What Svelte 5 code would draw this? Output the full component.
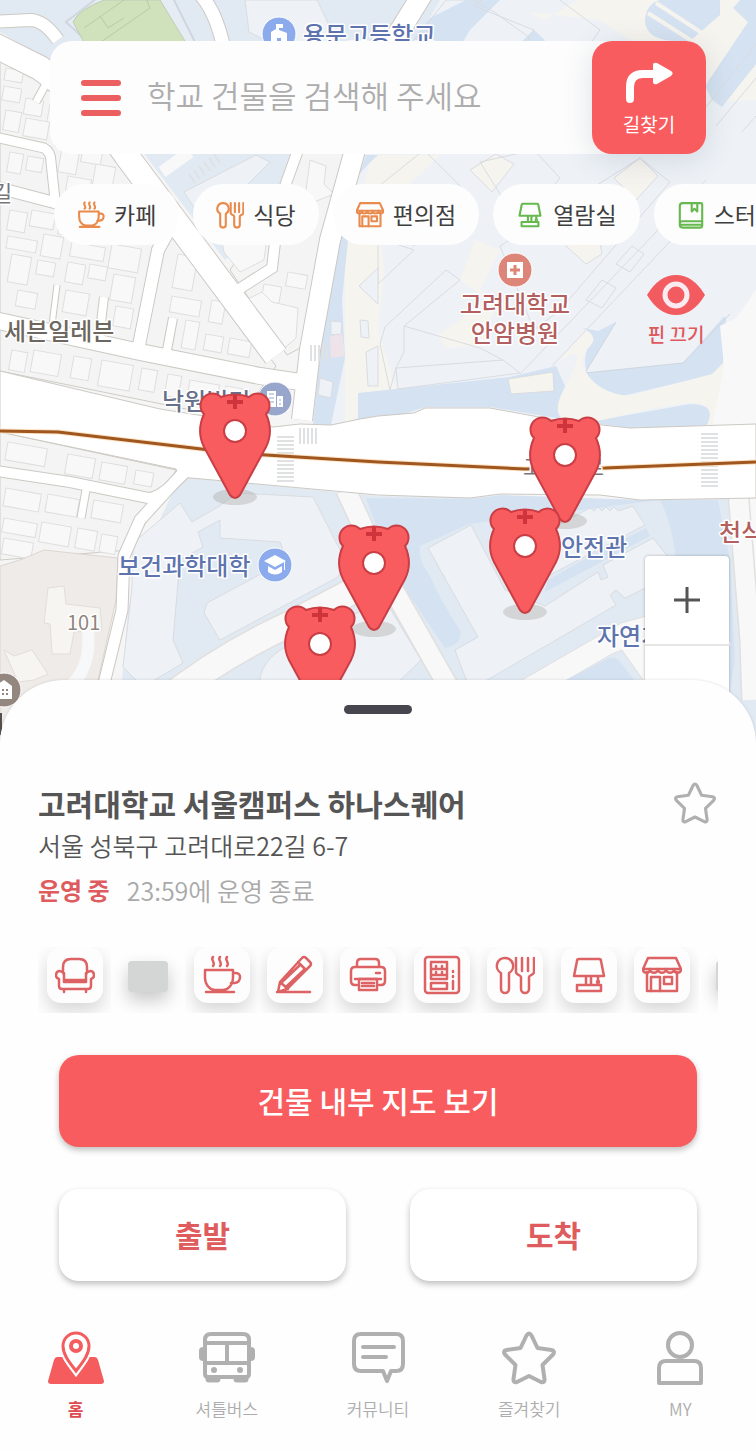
<script>
	let keyword = $state('');
	let showPins = $state(true);
	let favorite = $state(false);
	let tab = $state('home');

	const categories = [
		{ icon: 'cup', label: '카페', tone: 'orange' },
		{ icon: 'cutlery', label: '식당', tone: 'orange' },
		{ icon: 'store', label: '편의점', tone: 'orange' },
		{ icon: 'lamp', label: '열람실', tone: 'green' },
		{ icon: 'book', label: '스터디룸', tone: 'green' }
	];

	const facilities = ['sofa', null, 'cup', 'pencil', 'printer', 'vending', 'cutlery', 'lamp', 'store', null];

	const tabs = [
		{ id: 'home', label: '홈' },
		{ id: 'bus', label: '셔틀버스' },
		{ id: 'talk', label: '커뮤니티' },
		{ id: 'star', label: '즐겨찾기' },
		{ id: 'my', label: 'MY' }
	];

	// tip of each pin on the map
	const pins = [
		{ x: 235, y: 498 },
		{ x: 565, y: 522 },
		{ x: 374, y: 630 },
		{ x: 525, y: 613 },
		{ x: 320, y: 711 }
	];

	const roads = [
		{ w: 24, d: 'M-20 38 L40 68 Q95 108 126 155 L197 250 L276 356' },
		{ w: 12, d: 'M-10 22 L30 20 Q44 20 58 40' },
		{ w: 13, d: 'M196 -10 Q218 10 226 60' },
		{ w: 9, d: 'M-5 137 L44 148 Q51 152 51 162 L55 200' },
		{ w: 11, d: 'M-5 187 L60 204' },
		{ w: 12, d: 'M168 232 L158 250 L139 345' },
		{ w: 16, d: 'M-10 319 L140 352 L260 376 L300 382' },
		{ w: 10, d: 'M298 150 L280 200 L272 268 L236 291' },
		{ w: 20, d: 'M425 -10 L404 24 Q366 80 355 150 L330 240 L310 350 L302 420' },
		{ w: 10, d: 'M-10 470 L70 482 L148 498 Q160 498 186 472' },
		{ w: 11, d: 'M182 474 L140 520 L124 556 L122 610 L100 700' },
		{ w: 5, d: 'M57 285 L52 325' },
		{ w: 8, d: 'M104 297 L99 340' },
		{ w: 8, d: 'M173 318 L167 350' },
		{ w: 7, d: 'M86 490 L81 518' },
		{ w: 7, d: 'M46 84 L36 102' }
	];

	const campusRoads = [
		{ w: 25, d: 'M160 704 Q220 656 290 624 L385 574' },
		{ w: 19, d: 'M346 490 L385 575 L456 700' },
		{ w: 19, d: 'M738 490 L750 640 L752 700' }
	];

	// house outlines left of the hill road: x, y, width, height
	const houses = [
		[6, 68, 18, 12], [4, 86, 18, 14], [26, 98, 18, 16], [50, 104, 16, 22],
		[6, 110, 16, 20], [26, 118, 24, 18], [58, 128, 24, 18], [10, 152, 14, 20], [28, 156, 16, 14],
		[62, 148, 18, 24], [84, 142, 20, 20], [68, 176, 24, 14], [96, 164, 20, 22],
		[66, 196, 16, 16], [86, 194, 24, 16], [114, 192, 22, 20], [10, 210, 18, 20], [32, 210, 24, 16],
		[60, 220, 22, 14], [86, 218, 28, 20], [120, 218, 22, 18], [8, 236, 30, 12], [44, 234, 20, 22],
		[72, 242, 34, 14], [112, 244, 30, 24], [12, 254, 20, 28], [38, 260, 18, 14], [68, 262, 18, 20],
		[90, 264, 18, 14], [114, 274, 22, 26], [18, 290, 20, 16], [66, 290, 24, 22], [116, 306, 18, 20],
		[178, 254, 20, 34], [172, 296, 30, 16], [186, 320, 14, 28], [212, 300, 14, 22], [206, 334, 18, 16],
		[230, 338, 22, 16], [288, 272, 20, 14], [264, 284, 18, 20],
		[12, 350, 16, 20], [34, 350, 28, 22], [74, 356, 18, 22], [102, 360, 32, 26], [142, 368, 16, 22],
		[168, 374, 14, 22], [190, 380, 30, 14], [226, 386, 24, 12], [8, 442, 40, 18], [68, 454, 28, 20],
		[102, 462, 26, 18], [136, 470, 18, 14], [6, 488, 36, 18], [48, 494, 32, 18], [94, 500, 30, 18],
		[4, 518, 34, 14], [42, 522, 30, 20], [78, 528, 20, 20], [102, 534, 16, 18], [4, 538, 30, 16]
	];

	// wings of the hospital
	const wards = [
		'M408 48L446 0 474 0 494 12 530 38 512 60 430 60z',
		'M474 6L510 -20 560 0 600 30 590 44 540 60 524 44 534 30z',
		'M374 190L424 150 466 192 414 246z',
		'M378 238L414 250 378 284z',
		'M385 327L446 270 460 280 404 326 404 352 396 368 390 390 380 344z',
		'M396 368L503 360 520 373 398 389z',
		'M404 326L480 348 503 360',
		'M480 162L534 150 560 178 520 226z',
		'M500 246L640 158 670 182 560 310 534 330z',
		'M520 374L706 180 M552 366L700 210',
		'M586 300l16 8 14-20-14-8z M616 264l14 8 14-18-12-8z',
		'M702 112L756 44 M716 126L756 78 M742 132l14-16'
	];

	const crossings = [
		{ x: 300, y: 428, w: 23, h: 16, rows: false },
		{ x: 311, y: 345, w: 20, h: 16, rows: false },
		{ x: 277, y: 437, w: 17, h: 48, rows: true },
		{ x: 701, y: 434, w: 17, h: 58, rows: true }
	];
</script>

{#snippet icon(name)}
	<svg class="icon" viewBox="0 0 40 40" aria-hidden="true">
		{#if name === 'cup'}
			<path d="M3 15h28v7c0 8-5 13-10 13h-8C8 35 3 30 3 22z M31 18h3c6 0 5 9-1 10h-4 M4 37h28" />
			<path d="M11 2c-3 3 3 5 0 9 M18 2c-3 3 3 5 0 9 M25 2c-3 3 3 5 0 9" />
		{:else if name === 'cutlery'}
			<path d="M10 3a8 8 0 0 1 4 15v16a4 4 0 0 1-8 0V18A8 8 0 0 1 10 3z" />
			<path d="M21 3v14c0 3 5 3 5 5v12a4 4 0 0 0 8 0V22c0-2 5-2 5-5V3 M27 3v13 M33 3v13" />
		{:else if name === 'store'}
			<path d="M6 3h28l5 11H1z M5 17v19h30V17" />
			<path d="M1 14c0 5 7 5 7 0 0 5 8 5 8 0 0 5 8 5 8 0 0 5 8 5 8 0 0 5 7 5 7 0" />
			<path d="M9 36V22h9v14 M22 22h8v7h-8z" />
		{:else if name === 'lamp'}
			<path d="M10 4h20q2 0 2 2l3 15H5L8 6q0-2 2-2z M17 21v9 M22 21v9 M29 21v4 M8 30h24v6H8z" />
			<circle cx="29" cy="27" r="1" />
		{:else if name === 'book'}
			<path d="M8 3h26q2 0 2 2v30q0 3-3 3H8q-4 0-4-4V7q0-4 4-4z M4 32q0-3 4-3h28 M5 34h30 M21 4v11l4-4 4 4V4" />
		{:else if name === 'sofa'}
			<path d="M8 16v-4q0-8 8-8h8q8 0 8 8v4" />
			<path d="M9 25v-5a4 4 0 1 0-5 4v7q0 3 3 3h26q3 0 3-3v-7a4 4 0 1 0-5-4v5z M9 18v9h22v-9 M9 34v3 M31 34v3" />
		{:else if name === 'pencil'}
			<path d="M27 3q2-2 4 0l4 4q2 2 0 4L12 34 3 37l2-10z M23 7l8 8 M25 10L7 27 M30 14L12 31 M5 27l8 7 M2 37h33" />
		{:else if name === 'printer'}
			<path d="M9 12V8q0-4 4-4h14q4 0 4 4v4 M9 30H7q-4 0-4-4V16q0-4 4-4h26q4 0 4 4v10q0 4-4 4h-2 M7 24h26 M28 18h4" />
			<path d="M11 24h18v11H11z M14 28h12 M14 31h12" />
		{:else if name === 'vending'}
			<rect x="3" y="2" width="34" height="36" rx="3" />
			<path d="M9 7h16v17H9z M9 14h16 M9 20h16 M14 11v2 M20 11v2 M14 17v2 M20 17v2 M9 28h16v6H9z M31 16v1 M31 21v1 M31 26v8" />
		{/if}
	</svg>
{/snippet}

{#snippet star()}
	<svg class="star" viewBox="0 0 54 54" aria-hidden="true">
		<path d="M24.500 4.500q2.500-4 5 0l6 12.500 14 2q4 1 1.500 4.500L40.500 34l2 14q.5 4-3.500 3l-12-6-12 6q-4 1-3.500-3l2-14L3 23.500Q.5 20 4.500 19l14-2z" />
	</svg>
{/snippet}

<div class="app">
	<main class="map-area">
		<svg class="map" viewBox="0 0 756 750" preserveAspectRatio="xMidYMin slice" role="img" aria-label="지도">
			<rect width="756" height="750" fill="#f5f5f5" />

			<!-- campus and hospital grounds -->
			<path class="water" d="M0 0H480L376 60 345 160 225 260 145 155 48 60 0 32z" />
			<path class="ground" d="M350 155L440 0H756V430H313L335 250z" />
			<path class="pool" d="M406 48L430 18 466 0H500L470 30 452 60H406z M512 50L534 30 545 40 530 60z" />
			<path class="beige" d="M345 250L372 155H440L378 214 384 270 378 330 396 390 345 425z" />
			<path class="beige" d="M530 12L544 20 596 -10H756V100L712 102 700 80 660 60 600 20z" />
			<path class="beige line" d="M470 170l26-16 18 10-22 28z M614 178l26-20 18 18-22 24z M566 246l10-10 24 6 2 12-16 10z" />
			<path class="beige" d="M475 240L460 280 488 300 438 335 446 348 482 346 496 304 480 290 500 250z" />
			<path class="pool" d="M660 0H720V15L690 41Q645 44 645 20 646 4 660 0z M742 -2L733 8 748 22 705 86 712 100 722 107 756 64V-2z" />
			<path d="M648 13L692 41 M656 3L702 33" stroke="#f6f4ef" stroke-width="4" />
			<path class="pool" d="M358 393L510 377 556 366 566 388 Q580 410 611 418L690 404Q711 404 711 416T703 427L630 428 556 418 490 407 425 407 395 417 358 420z" />
			<path class="beige line" d="M508 379L553 372 554 391 511 394z" />
			<path class="pool" d="M334 240L352 190Q354 176 378 155H366L338 232z M340 240L350 220 342 300 345 358 331 425 313 425 322 330z" />
			<path class="pool" d="M583 328L598 331 616 322 700 300 726 318 723 363Q724 372 711 375L618 397Q598 396 588 376 580 354 594 340z" />
			<path class="ground" d="M616 322L585 373 683 363 756 280V230H680z" />
			<path d="M616 322L585 373 683 363 730 314" fill="none" stroke="#d0d6df" />
			<path class="beige" d="M585 329Q600 338 588 348 576 362 590 378T630 396L712 374 724 362 756 400V430L706 427Q716 408 700 404T611 418 565 387 558 363z" />
			<path d="M720 326L736 318 756 290V430H712L724 366z" fill="#f8f8f8" />
			{#each wards as d}
				<path class="ward" {d} />
			{/each}
			<path class="pink" d="M330 336l12-2 3 22-14 2z" />
			<path class="ground line" d="M331 321l11 1-1 12-10 1z M320 378l13 4-2 16-13-3z M360 320l8 1 1 17-8-1z M366 352l12-6v40h-10z M359 286l19-18v36z" />

			<!-- school field -->
			<path d="M66 22L105 -8H170L196 44H90z" fill="#e6ecf4" stroke="#d0d6df" stroke-width="2" />
			<path d="M73 22Q78 10 104 0H160L188 46H86z" fill="#cfe2bc" stroke="#c0ccb5" />
			<path d="M84 28L124 0 M98 44L150 8 146 -2 M100 16l8 12 16-10" fill="none" stroke="#b5cca4" />
			<path class="ground line" d="M245 0h72l20 42-48 10-40-20z M184 192L256 155 270 162 206 226z" />
			<path d="M162 172L190 152" stroke="#f8f8f8" stroke-width="12" />
			<g class="stripes">
				{#each [0, 1, 2, 3, 4, 5] as n}
					<path d="M{189 + n * 5} {174 - n * 4}l6 9" />
				{/each}
			</g>

			<!-- residential blocks -->
			<path class="block" d="M0 48L44 78 120 156 276 366 240 420 0 371z" />
			<path class="block" d="M230 270L276 200 298 150H350L302 347 287 355z M0 432L176 470 130 550 0 560z" />
			{#each houses as [x, y, w, h]}
				<rect class="house" {x} {y} width={w} height={h} transform="rotate(10 {x} {y})" />
			{/each}
			<path class="house" d="M310 160l16 6-2 18 10 10-20 8-8-12z M246 300l16-8 10 10 26 6-2 30-16 14-8-12z M214 200l36-10 22 10-8 60-24 12-16-20z" />

			<!-- apartment hill -->
			<path d="M0 566L20 560 44 550 118 558 116 600 98 680 0 750z" fill="#efebe8" stroke="#ddd6d0" />
			<path class="estate" d="M48 588l16-2 2 18 34 4 2 22-28 2-4 22-18 0-2-30-6-1z M4 650l10 6 18-6 16 24-14 6-16 2z" />
			<path d="M88 630Q92 670 66 690" fill="none" stroke="#f7f8f9" stroke-width="12" />

			<!-- lower campus -->
			<path class="water" d="M180 477L378 496 640 500 756 498V750H116L128 610 136 570z" />
			<path class="pool" d="M366 498L470 499 500 495 640 500H718L730 560 735 660 730 690H650L670 560 650 536 560 516 470 524 420 546Q418 560 430 576T461 630Q462 646 445 648L392 570z" />
			<path class="water" d="M420 546L470 524 660 500Q690 560 670 690H455L445 648Q464 644 460 630 440 600 430 576z" />
			<path class="pool" d="M545 592L650 536 646 528 590 556 548 580z" />
			<path class="ground line" d="M133 543L180 503 192 522 218 507 237 493 313 497 345 560 338 577 220 640 204 613 207 603 287 560 280 542 220 538 220 520 198 532 203 547 180 560 173 640 183 663 143 687 123 667 132 587z" />
			<path class="ground line" d="M428 548L471 525 505 590 545 606 598 572 601 580 608 577 603 565 653 538 672 562 672 575 625 598 616 590 610 595 616 605 470 690 455 650 478 637z" />
			<path class="ground line" d="M560 524L590 508 594 511 598 507 602 511 606 507 610 511 614 507 618 511 633 506 645 525 548 576 540 560z" />
			<path class="ground line" d="M260 690Q256 660 293 643L385 600 421 660 380 700z" />
			<path d="M515 684L621 623 650 615V690L622 650 612 654 560 684z" fill="#f8f8f8" stroke="#e0e0df" />
			<path class="pool" d="M554 686L609 658Q616 656 620 662L642 690z" />
			<path d="M744 500L756 498V700H744z" fill="#f8f8f8" />

			<!-- roads: casing first, then the surface -->
			{#each roads as road}
				<path d={road.d} fill="none" stroke="#ccc9c3" stroke-width={road.w + 2} />
			{/each}
			{#each campusRoads as road}
				<path d={road.d} fill="none" stroke="#e0e0df" stroke-width={road.w + 3} />
			{/each}
			{#each campusRoads as road}
				<path d={road.d} fill="none" stroke="#f8f8f8" stroke-width={road.w} />
			{/each}
			<path d="M0 371L160 409 273 427 300 424 331 425 360 419 378 416 414 413 425 408 490 408 555 420 630 428 756 424V498L640 500 600 495 500 494 470 498 378 495 180 477 176 469 0 432z" fill="#fff" stroke="#ccc9c3" stroke-width="1" />
			{#each roads as road}
				<path d={road.d} fill="none" stroke="#fff" stroke-width={road.w} />
			{/each}
			{#each crossings as c}
				<g class="stripes">
					{#each Array(Math.floor((c.rows ? c.h : c.w) / 4)) as _, n}
						{#if c.rows}
							<path d="M{c.x} {c.y + n * 4}h{c.w}" />
						{:else}
							<path d="M{c.x + n * 4} {c.y}v{c.h}" />
						{/if}
					{/each}
				</g>
			{/each}

			<!-- subway line -->
			<path d="M0 431L58 432 235 453 378 462 525 469 605 468 756 462" fill="none" stroke="#fbe3c4" stroke-width="5" />
			<path d="M0 431L58 432 235 453 378 462 525 469 605 468 756 462" fill="none" stroke="#a0561f" stroke-width="3" />

			<!-- place labels -->
			<g class="labels">
				<text class="school" x="303" y="44">용문고등학교</text>
				<text class="road-name" x="-8" y="201">길</text>
				<text class="shop" x="4" y="340">세븐일레븐</text>
				<text class="office" x="162" y="410">낙원빌딩</text>
				<text class="hospital" x="515" y="313" text-anchor="middle">고려대학교</text>
				<text class="hospital" x="515" y="342" text-anchor="middle">안암병원</text>
				<text class="road-name" x="523" y="475">고려대로</text>
				<text class="school" x="118" y="575">보건과학대학</text>
				<text class="school" x="561" y="556">안전관</text>
				<text class="school" x="597" y="645">자연계캠퍼스</text>
				<text class="hospital" x="719" y="541">천식환경</text>
				<text class="number" x="67" y="630">101</text>
			</g>

			<!-- place markers -->
			<g stroke="#fff" stroke-width="1">
				<circle cx="279" cy="34" r="17" fill="#8cabed" />
				<circle cx="275" cy="399" r="17" fill="#98a6cc" />
				<circle cx="515" cy="270" r="17" fill="#dd8579" />
				<circle cx="275" cy="565" r="17" fill="#8cabed" />
				<circle cx="4" cy="690" r="17" fill="#93877f" />
			</g>
			<path d="M271 42v-10l5-3v-5h7v4h-4v2l8 3v9h-6v-4h-4v4z" fill="#fff" />
			<path d="M267 391h9v16h-9z M277 396h6v11h-6z" fill="#fff" />
			<path d="M269 394h5 M269 398h5 M269 402h5 M279 400h2 M279 404h2" stroke="#98a6cc" stroke-width="1" />
			<path d="M507 262h16v16h-16z" fill="#fff" />
			<path d="M510 270h10 M515 265v10" stroke="#dd8579" stroke-width="3" />
			<path d="M264 561l11-6 11 6-11 6z M268 566l7 4 7-4v6q-7 5-14 0z M284 562h1v8h-1z" fill="#fff" />
			<path d="M-5 686l9-6 8 6v13H-5z" fill="#fff" />
			<path d="M2 690h6 M2 694h6" stroke="#93877f" stroke-width="2" stroke-dasharray="2 2" />
			<path d="M0 713h2v22h-2z" fill="#55504c" />

			{#if showPins}
				{#each pins as pin}
					<ellipse cx={pin.x} cy={pin.y - 1} rx="22" ry="8" fill="#a9a9a4" opacity="0.4" />
				{/each}
				{#each pins as pin}
					<g transform="translate({pin.x} {pin.y})">
						<path
							d="M-5 -3L-31 -51C-36 -61 -36 -73 -31 -84A12 12 0 1 1 -14 -101Q0 -106 14 -101A12 12 0 1 1 31 -84C36 -73 36 -61 31 -51L5 -3Q0 3 -5 -3z"
							fill="#f95c5e"
							stroke="#c93e45"
							stroke-width="2"
						/>
						<path d="M-8 -96H8 M0 -103V-89" stroke="#cf333b" stroke-width="4" />
						<circle cy="-67" r="11" fill="#fff" stroke="#c93e45" stroke-width="2" />
					</g>
				{/each}
			{/if}
		</svg>

		<form class="search" onsubmit={(e) => e.preventDefault()}>
			<button type="button" class="menu" aria-label="메뉴">
				<span></span><span></span><span></span>
			</button>
			<input type="text" aria-label="건물 검색" placeholder="학교 건물을 검색해 주세요" bind:value={keyword} />
			<button type="button" class="route">
				<svg viewBox="0 0 48 42" aria-hidden="true">
					<path d="M5 37V25Q5 12 18 12H30" fill="none" stroke="#fff" stroke-width="8" stroke-linecap="round" />
					<path d="M28 3q0-3 4-2l14 8q3 2 0 5l-14 8q-4 1-4-2z" fill="#fff" />
				</svg>
				길찾기
			</button>
		</form>

		<div class="chips">
			{#each categories as category}
				<button class="chip {category.tone}">
					{@render icon(category.icon)}
					<span>{category.label}</span>
				</button>
			{/each}
		</div>

		<button class="pin-toggle" onclick={() => (showPins = !showPins)}>
			<svg viewBox="0 0 58 42" aria-hidden="true">
				<path d="M0 21Q12 1 29 1T58 21Q46 41 29 41T0 21z" fill="#f25c60" />
				<circle cx="29" cy="21" r="11" fill="none" stroke="#fbeaf0" stroke-width="5" />
			</svg>
			{showPins ? '핀 끄기' : '핀 켜기'}
		</button>

		<div class="zoom">
			<button aria-label="확대">
				<svg viewBox="0 0 26 26" aria-hidden="true"><path d="M0 13H26 M13 0V26" /></svg>
			</button>
			<button aria-label="축소">
				<svg viewBox="0 0 26 26" aria-hidden="true"><path d="M0 13H26" /></svg>
			</button>
		</div>
	</main>

	<section class="sheet">
		<div class="handle"></div>

		<div class="place">
			<div class="title-row">
				<h1>고려대학교 서울캠퍼스 하나스퀘어</h1>
				<button class="favorite" class:on={favorite} aria-label="즐겨찾기 추가" onclick={() => (favorite = !favorite)}>
					{@render star()}
				</button>
			</div>
			<p class="address">서울 성북구 고려대로22길 6-7</p>
			<p class="hours"><strong>운영 중</strong><span>23:59에 운영 종료</span></p>
		</div>

		<ul class="facilities">
			{#each facilities as facility}
				<li>
					{#if facility}
						<div class="card">{@render icon(facility)}</div>
					{:else}
						<div class="blank"></div>
					{/if}
				</li>
			{/each}
		</ul>

		<div class="actions">
			<button class="primary">건물 내부 지도 보기</button>
			<button>출발</button>
			<button>도착</button>
		</div>

		<nav>
			{#each tabs as item}
				<button class:active={tab === item.id} onclick={() => (tab = item.id)}>
					{#if item.id === 'home'}
						<svg class="tab-icon" viewBox="0 0 56 54" aria-hidden="true">
							<path d="M9 26h38q2 0 3 3l6 21q0 3-3 3H3q-3 0-3-3l6-21q1-3 3-3z" fill="currentColor" />
							<path d="M28 42C22 34 14 25 14 15a14 14 0 0 1 28 0c0 10-8 19-14 27z" fill="#fff" stroke="#fff" stroke-width="5" />
							<path d="M28 40C22 32 15 24 15 15a13 13 0 0 1 26 0c0 9-7 17-13 25z" fill="#fff" stroke="currentColor" stroke-width="3" />
							<circle cx="28" cy="15" r="5" fill="none" stroke="currentColor" stroke-width="4" />
						</svg>
					{:else if item.id === 'bus'}
						<svg class="tab-icon line-icon" viewBox="0 0 56 54" aria-hidden="true">
							<path d="M12 3h32q6 0 6 6v34q0 3-3 3H9q-3 0-3-3V9q0-6 6-6z M6 12h44 M28 12v20 M6 32h44 M6 18H4q-2 0-2 2v6q0 2 2 2h2 M50 18h2q2 0 2 2v6q0 2-2 2h-2" />
							<path d="M10 48h8 M38 48h8" stroke-width="7" />
							<circle cx="15" cy="39" r="3" fill="currentColor" stroke="none" />
							<circle cx="41" cy="39" r="3" fill="currentColor" stroke="none" />
						</svg>
					{:else if item.id === 'talk'}
						<svg class="tab-icon line-icon" viewBox="0 0 56 54" aria-hidden="true">
							<path d="M11 3h35q7 0 7 7v23q0 7-7 7h-5l-4 10-4-10H11q-7 0-7-7V10q0-7 7-7z M13 16h31 M13 26h23" />
						</svg>
					{:else if item.id === 'star'}
						{@render star()}
					{:else}
						<svg class="tab-icon line-icon" viewBox="0 0 56 54" aria-hidden="true">
							<circle cx="28" cy="14" r="12" />
							<path d="M14 30h28q7 0 7 7v15H7V37q0-7 7-7z" />
						</svg>
					{/if}
					<span>{item.label}</span>
				</button>
			{/each}
		</nav>
	</section>
</div>

<style>
	:global(body) {
		background: #fefefe;
	}

	.app {
		display: flex;
		flex-direction: column;
		min-height: 100vh;
		overflow: hidden;
		font-family: "Noto Sans CJK KR", "Noto Sans", sans-serif;
		color: #555;
	}

	button {
		border: 0;
		padding: 0;
		background: none;
		font: inherit;
		color: inherit;
		cursor: pointer;
	}

	.icon {
		display: block;
		width: 40px;
		height: 40px;
		fill: none;
		stroke: currentColor;
		stroke-width: 2.500;
		stroke-linejoin: round;
		stroke-linecap: round;
	}

	/* map */
	.map-area {
		position: relative;
		flex: 1;
		display: flex;
		flex-direction: column;
		min-height: 560px;
	}

	.map {
		position: absolute;
		top: 0;
		left: 0;
		width: 100%;
		height: calc(100% + 70px);
	}

	.water {
		fill: #e1eaf3;
	}

	.pool {
		fill: #d5e2f1;
	}

	.ground {
		fill: #eef2f7;
	}

	.beige {
		fill: #f6f4ef;
	}

	.ward {
		fill: none;
		stroke: #d9dce0;
	}

	.pink {
		fill: #efe3ea;
	}

	.line {
		stroke: #d9dce0;
		stroke-width: 1;
	}

	.block {
		fill: #f4f4f4;
		stroke: #cfccc6;
	}

	.house {
		fill: #f8f8f8;
		stroke: #dedede;
		stroke-width: 1;
	}

	.estate {
		fill: #f6f5f2;
		stroke: #e2ded9;
	}

	.stripes {
		stroke: #dfe1e3;
		stroke-width: 2;
	}

	.labels {
		font-size: 24px;
		font-weight: 500;
		paint-order: stroke;
		stroke: #fff;
		stroke-width: 3px;
		stroke-linejoin: round;
	}

	.school {
		fill: #5e74ae;
	}

	.office {
		fill: #66708a;
	}

	.shop {
		fill: #6e675f;
	}

	.hospital {
		fill: #b35f60;
	}

	.road-name {
		fill: #77757a;
		font-size: 22px;
		font-weight: 400;
	}

	.number {
		fill: #8d857d;
		font-size: 20px;
		font-weight: 400;
	}

	.search {
		position: relative;
		display: flex;
		align-items: stretch;
		height: 113px;
		margin: 41px 50px 0;
		border-radius: 22px;
		background: #fdfdfd;
	}

	.menu {
		display: flex;
		flex-direction: column;
		justify-content: center;
		gap: 9px;
		flex: none;
		width: 40px;
		margin: 0 26px 0 31px;
	}

	.menu span {
		height: 6px;
		border-radius: 3px;
		background: #ec5f61;
	}

	input {
		flex: 1;
		min-width: 0;
		border: 0;
		padding: 0 0 6px;
		background: none;
		font: inherit;
		font-size: 31px;
		font-weight: 350;
		color: #555;
		outline: none;
	}

	input::placeholder {
		color: #adadad;
		opacity: 1;
	}

	.route {
		display: flex;
		flex-direction: column;
		align-items: center;
		justify-content: center;
		gap: 6px;
		flex: none;
		width: 114px;
		padding-top: 4px;
		border-radius: 20px;
		background: #f95c5e;
		box-shadow: 0 6px 30px rgba(60, 80, 100, 0.16);
		font-size: 19px;
		line-height: 28px;
		color: #fff;
	}

	.route svg {
		width: 48px;
		height: 42px;
	}

	.chips {
		position: relative;
		display: flex;
		gap: 14px;
		margin-top: 30px;
		padding-left: 54px;
		overflow: hidden;
	}

	.chip {
		display: flex;
		align-items: center;
		gap: 9px;
		flex: none;
		height: 61px;
		padding: 0 23px;
		border-radius: 31px;
		background: #fdfdfd;
		font-size: 23px;
		line-height: 32px;
	}

	.chip .icon {
		width: 28px;
		height: 28px;
		stroke-width: 3;
	}

	.chip span {
		padding-bottom: 2px;
		color: #3f3f3f;
	}

	.orange {
		color: #e98b4c;
	}

	.green {
		color: #66b84f;
	}

	.pin-toggle {
		position: relative;
		display: flex;
		flex-direction: column;
		align-items: center;
		align-self: flex-end;
		gap: 4px;
		margin: 29px 51px 0 0;
		font-size: 19px;
		font-weight: 500;
		line-height: 28px;
		color: #e0585c;
	}

	.pin-toggle svg {
		width: 58px;
		height: 42px;
	}

	.zoom {
		position: absolute;
		top: 556px;
		right: 27px;
		width: 84px;
		border-radius: 4px;
		background: #fff;
		box-shadow: 0 0 3px rgba(0, 0, 0, 0.3);
	}

	.zoom button {
		display: flex;
		align-items: center;
		justify-content: center;
		width: 100%;
		height: 88px;
	}

	.zoom button + button {
		border-top: 2px solid #e6e6e6;
	}

	.zoom svg {
		width: 26px;
		height: 26px;
		stroke: #555;
		stroke-width: 3;
	}

	/* bottom sheet */
	.sheet {
		position: relative;
		border-radius: 64px 64px 0 0;
		background: #fefefe;
		box-shadow: 0 0 3px rgba(0, 0, 0, 0.14);
	}

	.handle {
		width: 68px;
		height: 9px;
		margin: 25px auto 0;
		border-radius: 5px;
		background: #47464f;
	}

	.place {
		padding: 65px 40px 0 38px;
	}

	.title-row {
		display: flex;
		align-items: center;
		justify-content: space-between;
	}

	h1 {
		margin: 0;
		font-size: 30px;
		font-weight: 700;
		line-height: 48px;
	}

	.star {
		display: block;
		width: 54px;
		height: 54px;
		fill: none;
		stroke: currentColor;
		stroke-width: 4;
		stroke-linejoin: round;
	}

	.favorite {
		color: #b0b0b0;
	}

	.favorite .star {
		width: 42px;
		height: 42px;
	}

	.favorite.on .star {
		fill: #f95c5e;
	}

	p {
		margin: 0;
		font-size: 25px;
		font-weight: 350;
		line-height: 36px;
	}

	.hours {
		display: flex;
		gap: 17px;
		margin-top: 9px;
	}

	.hours strong {
		font-size: 24px;
		font-weight: 700;
		color: #df5c5e;
	}

	.hours span {
		color: #a9a9a9;
	}

	.facilities {
		display: flex;
		margin: 39px 38px 0;
		padding: 0;
		overflow: hidden;
		list-style: none;
	}

	.facilities li {
		display: flex;
		justify-content: center;
		flex: 0 0 auto;
		width: 10.8%;
		height: 66px;
		overflow: hidden;
	}

	.card {
		width: 40px;
		height: 40px;
		padding: 8px;
		border-radius: 14px;
		background: #fdfdfd;
		box-shadow: 0 8px 18px rgba(0, 0, 0, 0.16);
		color: #dd6264;
	}

	.blank {
		width: 40px;
		height: 31px;
		margin-top: 14px;
		border-radius: 4px;
		background: #d3d6d5;
		box-shadow: 0 8px 18px rgba(0, 0, 0, 0.22);
	}

	.actions {
		display: grid;
		grid-template-columns: 1fr 1fr;
		gap: 42px 64px;
		padding: 42px 59px 0;
	}

	.actions button {
		height: 92px;
		padding-bottom: 2px;
		border-radius: 20px;
		background: #fff;
		box-shadow: 0 3px 6px rgba(0, 0, 0, 0.25);
		font-size: 30px;
		font-weight: 700;
		color: #df5c5e;
	}

	.actions .primary {
		grid-column: 1 / -1;
		background: #f95c5e;
		font-weight: 500;
		color: #fff;
	}

	nav {
		display: grid;
		grid-template-columns: repeat(5, 1fr);
		padding: 50px 0 28px;
	}

	nav button {
		display: flex;
		flex-direction: column;
		align-items: center;
		gap: 11px;
		font-size: 17px;
		font-weight: 350;
		line-height: 26px;
		color: #adadad;
	}

	nav button.active {
		font-weight: 700;
		color: #df4a50;
	}

	.tab-icon {
		width: 56px;
		height: 54px;
	}

	.active .tab-icon {
		color: #f45c5e;
	}

	.line-icon {
		fill: none;
		stroke: currentColor;
		stroke-width: 4;
		stroke-linejoin: round;
		stroke-linecap: round;
	}

	nav .line-icon,
	nav .star {
		color: #b0b0b0;
	}
</style>
